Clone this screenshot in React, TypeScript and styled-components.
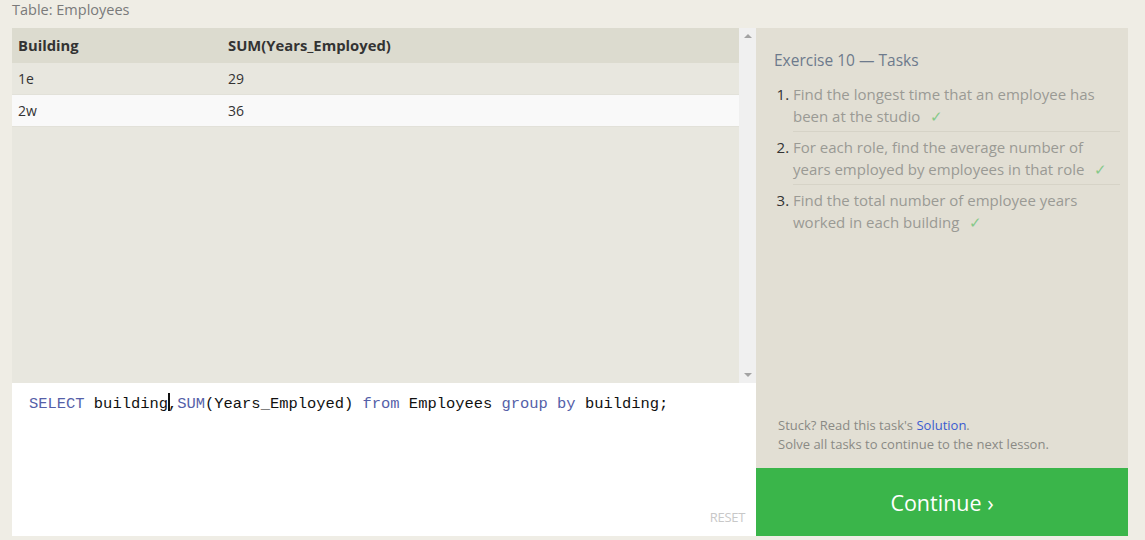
import React from "react";
import styled, { createGlobalStyle } from "styled-components";

const Global = createGlobalStyle`
  html, body { margin: 0; padding: 0; background: #efede5; }
  body { font-family: "Open Sans", "Lato", sans-serif; }
`;

const Page = styled.div`
  width: 1145px;
  height: 540px;
  padding: 0 17px 0 12px;
  box-sizing: border-box;
`;

const Title = styled.div`
  height: 28px;
  font-size: 14.5px;
  color: #7a7a7a;
  line-height: 20px;
`;

const Layout = styled.div`
  display: grid;
  grid-template-columns: 744px 372px;
  height: 508px;
`;

const LeftCol = styled.div`
  display: flex;
  flex-direction: column;
`;

const Results = styled.div`
  display: flex;
  height: 355px;
  background: #e8e7df;
`;

const TableWrap = styled.div`
  flex: 1;
`;

const Row = styled.div<{ $variant: "head" | "odd" | "even" }>`
  display: grid;
  grid-template-columns: 210px 1fr;
  padding-left: 6px;
  box-sizing: border-box;
  height: ${(p) => (p.$variant === "head" ? "35px" : "32px")};
  align-items: center;
  font-size: ${(p) => (p.$variant === "head" ? "14.8px" : "14px")};
  color: #333;
  font-weight: ${(p) => (p.$variant === "head" ? 700 : 400)};
  background: ${(p) =>
    p.$variant === "head" ? "#dcdbcf" : p.$variant === "even" ? "#f9f9f9" : "#e8e7df"};
  border-bottom: 1px solid ${(p) => (p.$variant === "head" ? "#dcdbcf" : "#e2e1d9")};
`;

const Scrollbar = styled.div`
  width: 17px;
  background: #f0f0f0;
  display: flex;
  flex-direction: column;
  justify-content: space-between;
  align-items: center;
  padding: 6px 0;
  box-sizing: border-box;
`;

const Arrow = styled.div<{ $down?: boolean }>`
  width: 0;
  height: 0;
  border-left: 4px solid transparent;
  border-right: 4px solid transparent;
  ${(p) =>
    p.$down
      ? "border-top: 4px solid #a3a3a3;"
      : "border-bottom: 4px solid #a3a3a3;"}
`;

const Editor = styled.div`
  position: relative;
  flex: 1;
  background: #fff;
  padding: 10px 17px;
  box-sizing: border-box;
  font-family: "Liberation Mono", monospace;
  font-size: 15.45px;
  color: #111;
  white-space: pre;
`;

const Kw = styled.span`
  color: #5560a8;
`;

const Caret = styled.span`
  display: inline-block;
  width: 2px;
  height: 18px;
  background: #111;
  vertical-align: -3px;
  margin-right: -2px;
`;

const Reset = styled.div`
  position: absolute;
  right: 11px;
  bottom: 10px;
  font-family: "Open Sans", sans-serif;
  font-size: 13px;
  color: #c8c8c8;
  letter-spacing: -0.3px;
`;

const RightCol = styled.div`
  display: flex;
  flex-direction: column;
`;

const Tasks = styled.div`
  flex: 1;
  background: #e2dfd4;
  padding: 20px 8px 0 18px;
  display: flex;
  flex-direction: column;
`;

const TasksTitle = styled.div`
  font-size: 15.5px;
  color: #6d7a8c;
  line-height: 24px;
  margin-bottom: 11px;
`;

const List = styled.ol`
  margin: 0;
  padding: 0 0 0 19px;
  font-size: 15px;
  line-height: 22px;
  color: #9a9a94;
`;

const Item = styled.li<{ $last?: boolean }>`
  padding: 0 0 4px 0;
  margin-bottom: 4px;
  border-bottom: ${(p) => (p.$last ? "none" : "1px solid #d6d3c7")};
  &::marker {
    color: #333;
  }
`;

const Check = styled.span`
  display: inline-block;
  line-height: 16px;
  font-family: "Open Sans", sans-serif;
  color: #86c98a;
  margin-left: 10px;
`;

const Footer = styled.div`
  margin-top: auto;
  padding: 0 0 14px 4px;
  font-size: 13px;
  line-height: 19px;
  color: #8a8a85;
`;

const Link = styled.a`
  color: #3a5bd0;
  text-decoration: none;
`;

const ContinueButton = styled.div`
  height: 68px;
  background: #3ab54a;
  color: #fff;
  font-size: 21.5px;
  display: flex;
  align-items: center;
  justify-content: center;
`;

export default function App() {
  return (
    <>
      <Global />
      <Page>
        <Title>Table: Employees</Title>
        <Layout>
          <LeftCol>
            <Results>
              <TableWrap>
                <Row $variant="head">
                  <span>Building</span>
                  <span>SUM(Years_Employed)</span>
                </Row>
                <Row $variant="odd">
                  <span>1e</span>
                  <span>29</span>
                </Row>
                <Row $variant="even">
                  <span>2w</span>
                  <span>36</span>
                </Row>
              </TableWrap>
              <Scrollbar>
                <Arrow />
                <Arrow $down />
              </Scrollbar>
            </Results>
            <Editor>
              <Kw>SELECT</Kw> building<Caret />,<Kw>SUM</Kw>(Years_Employed) <Kw>from</Kw> Employees{" "}
              <Kw>group</Kw> <Kw>by</Kw> building;
              <Reset>RESET</Reset>
            </Editor>
          </LeftCol>
          <RightCol>
            <Tasks>
              <TasksTitle>Exercise 10 — Tasks</TasksTitle>
              <List>
                <Item>
                  Find the longest time that an employee has been at the studio
                  <Check>✓</Check>
                </Item>
                <Item>
                  For each role, find the average number of years employed by employees in that role
                  <Check>✓</Check>
                </Item>
                <Item $last>
                  Find the total number of employee years worked in each building
                  <Check>✓</Check>
                </Item>
              </List>
              <Footer>
                Stuck? Read this task's <Link href="#">Solution</Link>.
                <br />
                Solve all tasks to continue to the next lesson.
              </Footer>
            </Tasks>
            <ContinueButton>Continue ›</ContinueButton>
          </RightCol>
        </Layout>
      </Page>
    </>
  );
}
